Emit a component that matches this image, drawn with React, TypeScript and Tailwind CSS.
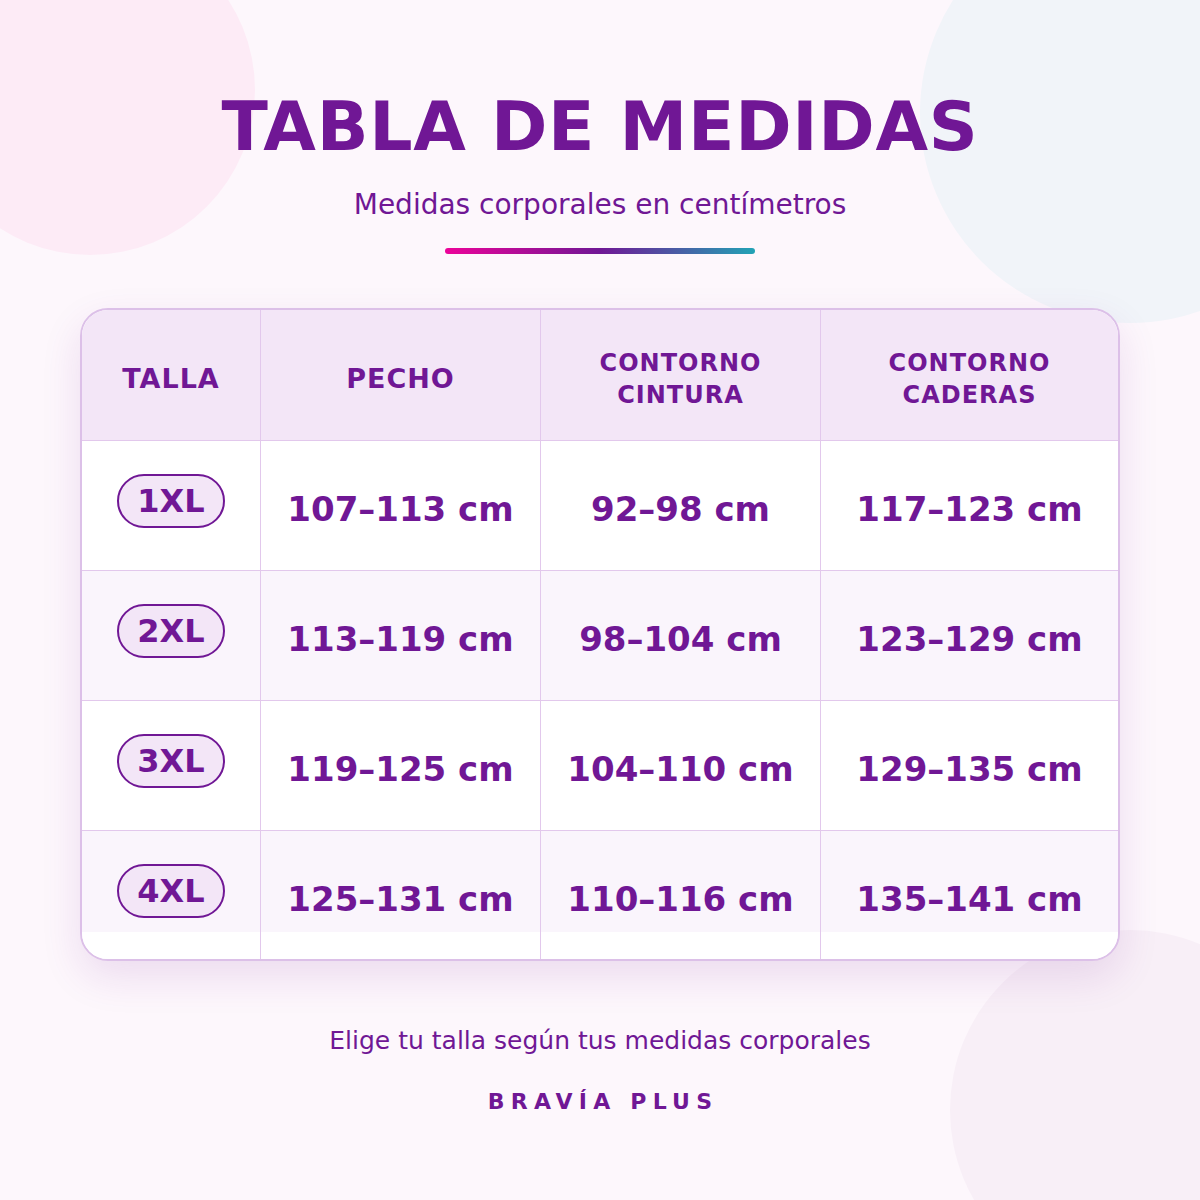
import React from 'react';

const rows = [
  { size: '1XL', chest: '107–113 cm', waist: '92–98 cm', hips: '117–123 cm' },
  { size: '2XL', chest: '113–119 cm', waist: '98–104 cm', hips: '123–129 cm' },
  { size: '3XL', chest: '119–125 cm', waist: '104–110 cm', hips: '129–135 cm' },
  { size: '4XL', chest: '125–131 cm', waist: '110–116 cm', hips: '135–141 cm' },
];

const headers = ['TALLA', 'PECHO', 'CONTORNO\nCINTURA', 'CONTORNO\nCADERAS'];

const font = "font-['DejaVu_Sans',sans-serif]";

export default function App() {
  return (
    <div className={`relative w-[1200px] h-[1200px] overflow-hidden bg-[#fdf7fc] text-[#701795] ${font}`}>
      {/* círculos decorativos */}
      <div className="absolute left-[-75px] top-[-75px] w-[330px] h-[330px] rounded-full bg-[#fdebf6]" />
      <div className="absolute left-[920px] top-[-97px] w-[420px] h-[420px] rounded-full bg-[#f1f4f9]" />
      <div className="absolute left-[950px] top-[930px] w-[360px] h-[360px] rounded-full bg-[#f8eff7]" />

      <div className="relative flex flex-col items-center pt-[93px]">
        <h1 className="text-[68px] leading-none font-bold tracking-[0.7px]">TABLA DE MEDIDAS</h1>
        <p className="mt-[30px] text-[28px] leading-none">Medidas corporales en centímetros</p>
        <div className="mt-[29px] w-[310px] h-[6px] rounded-full bg-[linear-gradient(to_right,#ec0399,#701795_50%,#22a3b5)]" />

        {/* tabla */}
        <div className="mt-[54px] w-[1040px] h-[653px] rounded-[28px] border-2 border-[#dcc0e8] bg-white overflow-hidden shadow-[0_16px_40px_rgba(112,23,149,0.12)]">
          <div className="grid grid-cols-[179px_280px_280px_297px]">
            {headers.map((h, i) => (
              <div
                key={h}
                className={`h-[131px] flex items-center justify-center pt-[8px] bg-[#f3e6f7] border-b border-[#e2c8ec] ${i < 3 ? 'border-r' : ''}`}
              >
                <span
                  className={`whitespace-pre-line text-center leading-[32px] font-bold ${
                    i < 2 ? 'text-[27px] tracking-[1px]' : 'text-[24px] tracking-[1px]'
                  }`}
                >
                  {h}
                </span>
              </div>
            ))}
            {rows.map((r, ri) => {
              const last = ri === rows.length - 1;
              const bg = last
                ? 'bg-[linear-gradient(to_bottom,#faf5fc_101px,#ffffff_101px)]'
                : ri % 2 === 0
                  ? 'bg-white'
                  : 'bg-[#faf5fc]';
              const cell = `h-[130px] flex justify-center border-[#e2c8ec] ${bg} ${last ? '' : 'border-b'}`;
              return (
                <React.Fragment key={r.size}>
                  <div className={`${cell} border-r pt-[33px]`}>
                    <span className="h-[54px] px-[18px] flex items-center rounded-full border-2 border-[#701795] bg-[#f3e6f7] text-[32px] font-bold leading-none">
                      {r.size}
                    </span>
                  </div>
                  {[r.chest, r.waist, r.hips].map((v, vi) => (
                    <div key={vi} className={`${cell} ${vi < 2 ? 'border-r' : ''} pt-[51px]`}>
                      <span className="text-[34px] font-bold leading-none">{v}</span>
                    </div>
                  ))}
                </React.Fragment>
              );
            })}
          </div>
        </div>

        <p className="mt-[67px] text-[25px] leading-none">Elige tu talla según tus medidas corporales</p>
        <p className="mt-[38px] pl-[6px] text-[22px] leading-none font-bold tracking-[6.2px]">BRAVÍA PLUS</p>
      </div>
    </div>
  );
}
